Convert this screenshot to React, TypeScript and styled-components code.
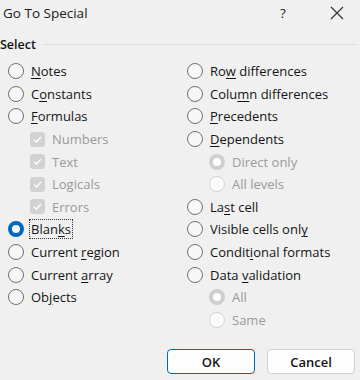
import React from 'react'
import styled, { createGlobalStyle } from 'styled-components'

const Global = createGlobalStyle`
  body {
    margin: 0;
    background: #f0f0f0;
  }
`

type Opt = {
  label: string
  key?: number
  kind: 'radio' | 'check'
  sub?: boolean
  checked?: boolean
  disabled?: boolean
  focus?: boolean
}

const left: Opt[] = [
  { label: 'Notes', key: 0, kind: 'radio' },
  { label: 'Constants', key: 1, kind: 'radio' },
  { label: 'Formulas', key: 0, kind: 'radio' },
  { label: 'Numbers', kind: 'check', sub: true, checked: true, disabled: true },
  { label: 'Text', kind: 'check', sub: true, checked: true, disabled: true },
  { label: 'Logicals', kind: 'check', sub: true, checked: true, disabled: true },
  { label: 'Errors', kind: 'check', sub: true, checked: true, disabled: true },
  { label: 'Blanks', key: 4, kind: 'radio', checked: true, focus: true },
  { label: 'Current region', key: 8, kind: 'radio' },
  { label: 'Current array', key: 8, kind: 'radio' },
  { label: 'Objects', key: 2, kind: 'radio' },
]

const right: Opt[] = [
  { label: 'Row differences', key: 2, kind: 'radio' },
  { label: 'Column differences', key: 4, kind: 'radio' },
  { label: 'Precedents', key: 0, kind: 'radio' },
  { label: 'Dependents', key: 0, kind: 'radio' },
  { label: 'Direct only', kind: 'radio', sub: true, checked: true, disabled: true },
  { label: 'All levels', kind: 'radio', sub: true, disabled: true },
  { label: 'Last cell', key: 2, kind: 'radio' },
  { label: 'Visible cells only', key: 17, kind: 'radio' },
  { label: 'Conditional formats', key: 6, kind: 'radio' },
  { label: 'Data validation', key: 5, kind: 'radio' },
  { label: 'All', kind: 'radio', sub: true, checked: true, disabled: true },
  { label: 'Same', kind: 'radio', sub: true, disabled: true },
]

const Dialog = styled.div`
  width: 360px;
  height: 380px;
  background: #f0f0f0;
  font-family: 'Open Sans', 'Noto Sans', sans-serif;
  color: #141414;
  display: flex;
  flex-direction: column;
`

const TitleBar = styled.div`
  height: 26px;
  display: flex;
  align-items: center;
  padding-left: 3px;
  font-size: 13.5px;
  color: #202020;
`

const Title = styled.div`
  flex: 1;
`

const TitleButton = styled.div`
  width: 22px;
  display: flex;
  justify-content: center;
  align-items: center;
  margin-right: 32px;
  &:last-child {
    margin-right: 12px;
  }
`

const GroupHead = styled.div`
  margin-top: 10px;
  display: flex;
  align-items: center;
  gap: 7px;
  font-size: 12.5px;
  font-weight: 600;
  padding-right: 4px;
  &::after {
    content: '';
    flex: 1;
    height: 1px;
    background: #dcdcdc;
  }
`

const Columns = styled.div`
  display: grid;
  grid-template-columns: 179px 1fr;
  padding-left: 8px;
  margin-top: 7px;
`

const Column = styled.div`
  display: flex;
  flex-direction: column;
`

const Row = styled.div<{ $sub?: boolean }>`
  height: 22.6px;
  display: flex;
  align-items: center;
  gap: 6px;
  padding-left: ${(p) => (p.$sub ? '22px' : '0')};
  font-size: 13px;
  font-weight: 500;
`

const Label = styled.span<{ $disabled?: boolean; $focus?: boolean }>`
  color: ${(p) => (p.$disabled ? '#9a9a9a' : '#141414')};
  outline: ${(p) => (p.$focus ? '1px dotted #333' : 'none')};
  outline-offset: 0px;
  padding: 0 1px;
  line-height: 18px;
  u {
    text-decoration-thickness: 1px;
    text-underline-offset: 2px;
  }
`

const Radio = styled.span<{ $checked?: boolean; $disabled?: boolean }>`
  width: 16px;
  height: 16px;
  box-sizing: border-box;
  border-radius: 50%;
  flex: none;
  border: ${(p) =>
    p.$disabled
      ? p.$checked
        ? '4.5px solid #cfcfcf'
        : '1px solid #d2d2d2'
      : p.$checked
      ? '4.5px solid #0067c0'
      : '1.5px solid #707070'};
  background: ${(p) => (p.$disabled ? (p.$checked ? '#ffffff' : '#fbfbfb') : '#f7f7f7')};
`

const Check = styled.span`
  width: 15px;
  height: 15px;
  border-radius: 3px;
  background: #d2d2d2;
  flex: none;
  display: flex;
  align-items: center;
  justify-content: center;
`

const Buttons = styled.div`
  margin-top: auto;
  margin-bottom: 6px;
  display: flex;
  justify-content: flex-end;
  gap: 12px;
  padding-right: 5px;
`

const Button = styled.button<{ $primary?: boolean }>`
  width: 88px;
  height: 25px;
  border-radius: 4px;
  background: #fdfdfd;
  border: ${(p) => (p.$primary ? '1.5px solid #0067c0' : '1px solid #d0d0d0')};
  font-family: 'Open Sans', 'Noto Sans', sans-serif;
  font-size: 13px;
  font-weight: 600;
  color: #141414;
  padding: 0;
`

function Text({ o }: { o: Opt }) {
  if (o.key === undefined) return <>{o.label}</>
  return (
    <>
      {o.label.slice(0, o.key)}
      <u>{o.label[o.key]}</u>
      {o.label.slice(o.key + 1)}
    </>
  )
}

function Item({ o }: { o: Opt }) {
  return (
    <Row $sub={o.sub}>
      {o.kind === 'radio' ? (
        <Radio $checked={o.checked} $disabled={o.disabled} />
      ) : (
        <Check>
          <svg width="11" height="11" viewBox="0 0 11 11">
            <path d="M2 5.8 L4.4 8 L9 3" fill="none" stroke="#fff" strokeWidth="1.3" />
          </svg>
        </Check>
      )}
      <Label $disabled={o.disabled} $focus={o.focus}>
        <Text o={o} />
      </Label>
    </Row>
  )
}

export default function App() {
  return (
    <Dialog>
      <Global />
      <TitleBar>
        <Title>Go To Special</Title>
        <TitleButton>?</TitleButton>
        <TitleButton>
          <svg width="14" height="14" viewBox="0 0 14 14">
            <path d="M1 1 L13 13 M13 1 L1 13" stroke="#333" strokeWidth="1.2" />
          </svg>
        </TitleButton>
      </TitleBar>
      <GroupHead>Select</GroupHead>
      <Columns>
        <Column>
          {left.map((o) => (
            <Item key={o.label} o={o} />
          ))}
        </Column>
        <Column>
          {right.map((o) => (
            <Item key={o.label} o={o} />
          ))}
        </Column>
      </Columns>
      <Buttons>
        <Button $primary>OK</Button>
        <Button>Cancel</Button>
      </Buttons>
    </Dialog>
  )
}
